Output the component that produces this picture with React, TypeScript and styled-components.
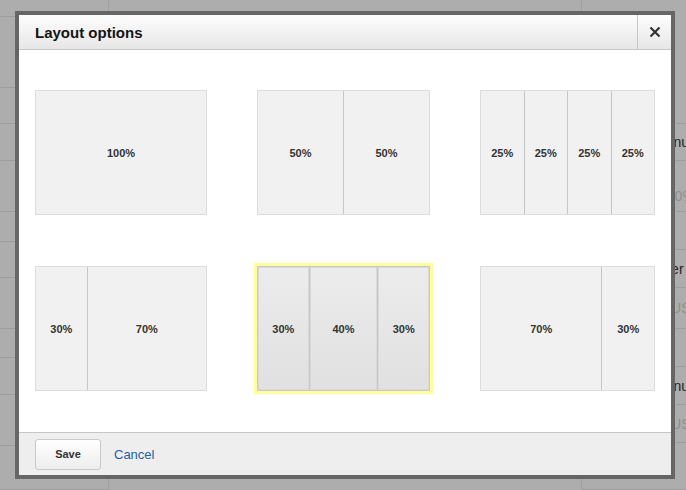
import React from 'react';
import styled, { createGlobalStyle, css } from 'styled-components';

const GlobalStyle = createGlobalStyle`
  html, body {
    margin: 0;
    padding: 0;
    background: #adadad;
    font-family: "Liberation Sans", Arial, Helvetica, sans-serif;
    overflow: hidden;
  }
`;

// page that sits behind the modal (already dimmed)
const Page = styled.div`
  display: flex;
  width: 686px;
  height: 490px;
  background: #adadad;
`;

const SideCol = styled.div`
  width: 108px;
  border-right: 1px solid #9f9f9f;
  display: flex;
  flex-direction: column;
`;

const MidCol = styled.div`
  flex: 1;
  border-right: 1px solid #9f9f9f;
`;

const InfoCol = styled.div`
  width: 104px;
  display: flex;
  flex-direction: column;
`;

const PageRow = styled.div<{ $h: number; $muted?: boolean; $top?: number; $indent?: number }>`
  height: ${(p) => p.$h}px;
  flex-shrink: 0;
  border-bottom: 1px solid #9d9d9d;
  box-sizing: border-box;
  display: flex;
  align-items: center;
  padding-left: ${(p) => p.$indent ?? 72}px;
  padding-top: ${(p) => p.$top ?? 0}px;
  font-size: 14px;
  white-space: nowrap;
  color: ${(p) => (p.$muted ? '#8f8f8f' : '#222222')};
`;

const Overlay = styled.div`
  position: fixed;
  inset: 0;
`;

const Dialog = styled.div`
  position: absolute;
  left: 15px;
  top: 11px;
  width: 652px;
  height: 460px;
  border: 4px solid #666666;
  background: #ffffff;
  display: flex;
  flex-direction: column;
`;

const Header = styled.div`
  height: 34px;
  flex-shrink: 0;
  display: flex;
  align-items: stretch;
  border-bottom: 1px solid #c6c6c6;
  background: linear-gradient(#fdfdfd, #e7e7e7);
`;

const Title = styled.h2`
  flex: 1;
  margin: 0;
  padding-left: 16px;
  display: flex;
  align-items: center;
  font-size: 15px;
  font-weight: bold;
  color: #141414;
`;

const CloseButton = styled.button`
  width: 34px;
  border: none;
  border-left: 1px solid #c6c6c6;
  background: transparent;
  padding: 0;
  display: flex;
  align-items: center;
  justify-content: center;
  cursor: pointer;
`;

const Body = styled.div`
  flex: 1;
  padding: 40px 16px 0;
  display: grid;
  grid-template-columns: 172px 173px 175px;
  grid-template-rows: 125px 125px;
  column-gap: 50px;
  row-gap: 51px;
`;

const Tile = styled.div<{ $selected?: boolean }>`
  display: flex;
  box-sizing: border-box;
  border: 1px solid #dddddd;
  background: #f1f1f1;
  cursor: pointer;
  ${(p) =>
    p.$selected &&
    css`
      outline: 3px solid #ffff9c;
      border-color: #c9c9c9;
    `}
`;

const Cell = styled.div<{ $w: number; $selected?: boolean }>`
  flex: ${(p) => p.$w} 1 0;
  display: flex;
  align-items: center;
  justify-content: center;
  font-size: 11px;
  font-weight: bold;
  color: #333333;
  & + & {
    border-left: 1px solid #dcdcdc;
  }
  ${(p) =>
    p.$selected &&
    css`
      background: linear-gradient(#ececec, #e0e0e0);
      box-shadow: inset 0 0 0 1px #d9d9d9;
      & + & {
        border-left: 1px solid #c7c7c7;
      }
    `}
`;

const Footer = styled.div`
  height: 42px;
  flex-shrink: 0;
  border-top: 1px solid #c6c6c6;
  background: #eeeeee;
  display: flex;
  align-items: center;
  padding-left: 16px;
  gap: 13px;
`;

const SaveButton = styled.button`
  width: 66px;
  height: 31px;
  box-sizing: border-box;
  border: 1px solid #c9c9c9;
  border-radius: 3px;
  background: linear-gradient(#ffffff, #ededed);
  font-family: inherit;
  font-size: 11px;
  font-weight: bold;
  color: #333333;
  cursor: pointer;
`;

const CancelLink = styled.a`
  font-size: 13px;
  color: #1d60a8;
  text-decoration: none;
  cursor: pointer;
`;

const layouts = [
  [100],
  [50, 50],
  [25, 25, 25, 25],
  [30, 70],
  [30, 40, 30],
  [70, 30],
];

const sideRows = [17, 71, 36, 37, 51, 30, 36, 51, 29, 37, 51, 44];
const infoRows: [number, string, boolean?, number?, number?][] = [
  [124, ''],
  [37, 'Menu'],
  [51, '100%', true, 20, 77],
  [38, ''],
  [38, 'User'],
  [41, 'PLUS', true],
  [38, ''],
  [38, 'Menu'],
  [38, 'PLUS', true],
  [47, ''],
];

export default function App() {
  const selected = 4;
  return (
    <>
      <GlobalStyle />
      <Page>
        <SideCol>
          {sideRows.map((h, i) => (
            <PageRow key={i} $h={h} />
          ))}
        </SideCol>
        <MidCol />
        <InfoCol>
          {infoRows.map(([h, label, muted, top, indent], i) => (
            <PageRow key={i} $h={h} $muted={muted} $top={top} $indent={indent}>
              {label}
            </PageRow>
          ))}
        </InfoCol>
      </Page>
      <Overlay>
        <Dialog>
          <Header>
            <Title>Layout options</Title>
            <CloseButton aria-label="Close">
              <svg width="12" height="12" viewBox="0 0 12 12">
                <path d="M1.5 1.5 L10.5 10.5 M10.5 1.5 L1.5 10.5" stroke="#333" strokeWidth="2.2" />
              </svg>
            </CloseButton>
          </Header>
          <Body>
            {layouts.map((cols, i) => (
              <Tile key={i} $selected={i === selected}>
                {cols.map((w, j) => (
                  <Cell key={j} $w={w} $selected={i === selected}>
                    {w}%
                  </Cell>
                ))}
              </Tile>
            ))}
          </Body>
          <Footer>
            <SaveButton>Save</SaveButton>
            <CancelLink>Cancel</CancelLink>
          </Footer>
        </Dialog>
      </Overlay>
    </>
  );
}
